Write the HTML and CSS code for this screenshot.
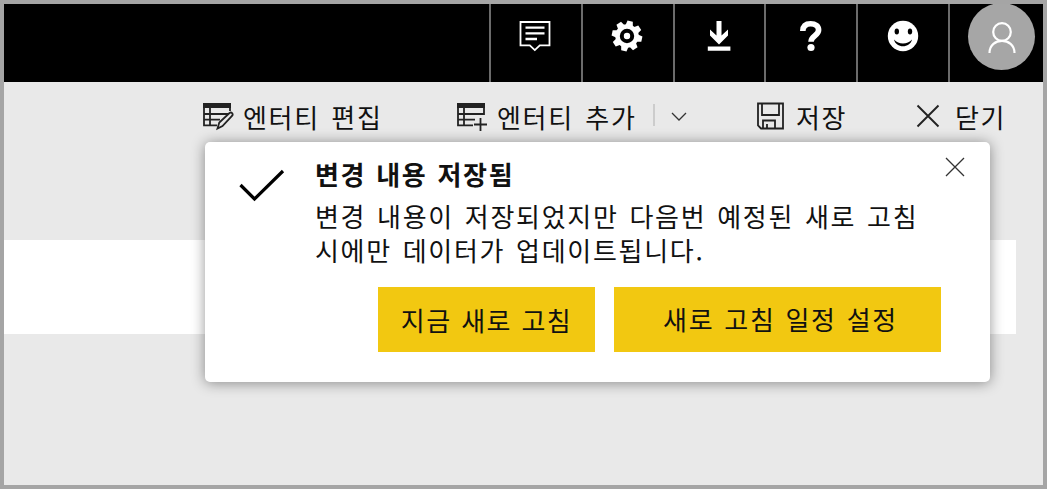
FILE: index.html
```html
<!DOCTYPE html>
<html lang="ko">
<head>
<meta charset="utf-8">
<title>Power BI</title>
<link rel="stylesheet" href="styles.css">
</head>
<body>
<div class="app">
  <header class="topbar">
    <div class="cell"><svg width="32" height="32" viewBox="0 0 32 32" fill="none" stroke="#fff" stroke-width="1.8"><path d="M1.500 2h29v23.300h-9.700l-5 4.800-5-4.800H1.500z"/><path d="M6.500 7.700h19M6.500 13.400h19M6.500 19h11.500" stroke-width="2.300"/></svg></div>
    <div class="cell"><svg width="32" height="32" viewBox="-16 -16 32 32"><g fill="#fff"><circle r="11.700"/><g transform="rotate(12)"><path id="t" d="M-3.600-11L-2.700-15.200H2.700L3.600-11V11L2.700 15.200H-2.700L-3.600 11z"/><use href="#t" transform="rotate(45)"/><use href="#t" transform="rotate(90)"/><use href="#t" transform="rotate(135)"/></g></g><circle r="5.200" fill="#fff" stroke="#000" stroke-width="4"/><circle r="2.600" fill="#fff"/></svg></div>
    <div class="cell"><svg width="32" height="32" viewBox="0 0 32 32"><path d="M13.500 1h5v14.500l6.500-6v6L16 24.500l-9-9v-6l6.500 6zM4.800 26.500h22.600v4.200H4.800z" fill="#fff"/></svg></div>
    <div class="cell"><svg width="32" height="32" viewBox="0 0 32 32"><path d="M7.800 11C8 5.500 11.300 3.800 15.600 3.800c5 0 8 2.400 8 6.300 0 5.700-7.600 5.700-7.600 11.600" fill="none" stroke="#fff" stroke-width="5.600"/><circle cx="16" cy="27.500" r="3.600" fill="#fff"/></svg></div>
    <div class="cell"><svg width="32" height="32" viewBox="0 0 32 32"><circle cx="16" cy="16" r="15.200" fill="#fff"/><ellipse cx="9.800" cy="11.500" rx="2.200" ry="3"/><ellipse cx="23" cy="11.500" rx="2.200" ry="3"/><path d="M7 19.500c4.500 5.400 13.500 5.400 18 0-1.800 9-16.200 9-18 0z"/></svg></div>
    <div class="cell account"><div class="avatar"><svg width="30" height="34" viewBox="0 0 30 34" fill="none" stroke="#fff" stroke-width="2.200"><circle cx="15" cy="11" r="8.800"/><path d="M2.500 32C2.500 15.700 27.500 15.700 27.500 32"/></svg></div></div>
  </header>
  <nav class="toolbar">
    <div class="tool edit"><svg width="32" height="30" viewBox="0 0 32 30" fill="none" stroke="#222" stroke-width="1.800"><path d="M1 1h28v5H1z" fill="#222" stroke="none"/><path d="M2 5v18.300h13M2 12h24M2 17.700h16M8 6v17M28 5v4"/><path d="M15.500 26.500l1.800-6L27.500 11c2-1.300 4 .8 2.700 2.700L20.500 24z"/></svg><span>엔터티 편집</span></div>
    <div class="tool add"><svg width="32" height="30" viewBox="0 0 32 30" fill="none" stroke="#222" stroke-width="1.800"><path d="M1 1h28v5H1z" fill="#222" stroke="none"/><path d="M2 5v18.300h15M2 12h26V5M2 17.700h17M8 6v17M24.500 16v13M18 22.500h13"/></svg><span>엔터티 추가</span></div>
    <span class="divider"></span>
    <svg class="chevron" width="16" height="10" viewBox="0 0 16 10" fill="none" stroke="#333" stroke-width="1.300"><path d="M1 1l7 7 7-7"/></svg>
    <div class="tool save"><svg width="30" height="30" viewBox="0 0 30 30" fill="none" stroke="#222" stroke-width="1.800"><path d="M2 1.500h25v25H5l-3-3z"/><path d="M6 2v11h17V2M7 26v-7.500h12V26M11 26v-4"/></svg><span>저장</span></div>
    <div class="tool close"><svg width="24" height="24" viewBox="0 0 24 24" fill="none" stroke="#222" stroke-width="1.900"><path d="M1.500 1.500l21 21M22.500 1.500l-21 21"/></svg><span>닫기</span></div>
  </nav>
  <main class="band"></main>
  <section class="dialog" role="dialog">
    <svg class="check" width="46" height="34" viewBox="0 0 46 34" fill="none" stroke="#000" stroke-width="3.200"><path d="M1.500 16L15.500 30 44 2"/></svg>
    <div class="content">
      <h1>변경 내용 저장됨</h1>
      <p>변경 내용이 저장되었지만 다음번 예정된 새로 고침<br>시에만 데이터가 업데이트됩니다.</p>
      <div class="actions"><button class="now">지금 새로 고침</button><button class="schedule">새로 고침 일정 설정</button></div>
    </div>
    <svg class="dismiss" width="20" height="20" viewBox="0 0 20 20" fill="none" stroke="#333" stroke-width="1.300"><path d="M1 1l18 18M19 1L1 19"/></svg>
  </section>
</div>
</body>
</html>
```
FILE: styles.css
```css
* { box-sizing: border-box; }
body { margin: 0; font-family: "Noto Sans CJK KR", sans-serif; color: #111; }
.app { position: relative; width: 1047px; height: 489px; border: 4px solid #a5a5a5; background: #e9e9e9; overflow: hidden; font-size: 26px; letter-spacing: 1.7px; word-spacing: 2.5px; }
.topbar { display: flex; justify-content: flex-end; height: 78px; background: #000; }
.cell { display: flex; justify-content: center; width: 91.8px; padding: 16px 1px 0 0; border-left: 2px solid #6b6b6b; }
.account { width: 95px; padding: 0 0 0 18px; justify-content: flex-start; }
.avatar { display: flex; flex: none; justify-content: center; width: 67px; height: 67px; margin-top: -1px; padding-top: 18px; border-radius: 50%; background: #a6a6a6; }
.toolbar { display: flex; align-items: flex-start; height: 158px; padding: 20px 0 0 198px; }
.tool { display: flex; flex: none; white-space: nowrap; line-height: 32px; }
.tool span { margin-top: -1px; }
.edit, .add { gap: 9px; }
.edit { width: 254px; }
.add { width: 197px; }
.divider { width: 2px; height: 22px; margin-top: 2px; background: #ccc; }
.chevron { margin: 10px 0 0 16px; }
.save { width: 160px; margin-left: 69px; gap: 10px; }
.close { gap: 15px; }
.close svg { margin-top: 2px; }
.band { width: 1012px; height: 94px; background: #fff; }
.dialog { position: absolute; left: 201px; top: 138px; display: flex; width: 785px; height: 240px; padding: 13px 24px 0 34px; border-radius: 5px; background: #fff; box-shadow: 0 1px 14px rgba(0, 0, 0, .42); word-spacing: 1.9px; }
.check { flex: none; margin: 14px 30px 0 0; }
.content { flex: none; width: 627px; }
h1 { margin: 0; font-size: 26px; line-height: 38px; font-weight: 700; word-spacing: 1px; }
p { margin: 6px 0 0; line-height: 34px; white-space: nowrap; }
.actions { display: flex; gap: 19px; margin: 20px 0 0 63px; }
button { height: 65px; padding: 0 0 1px; border: 0; background: #f2c811; color: #111; font: inherit; letter-spacing: inherit; word-spacing: 1px; }
.now { width: 217px; letter-spacing: 1.4px; }
.schedule { width: 327px; padding: 0 0 2px 6px; }
.dismiss { flex: none; margin: 2px 0 0 3px; }
```
